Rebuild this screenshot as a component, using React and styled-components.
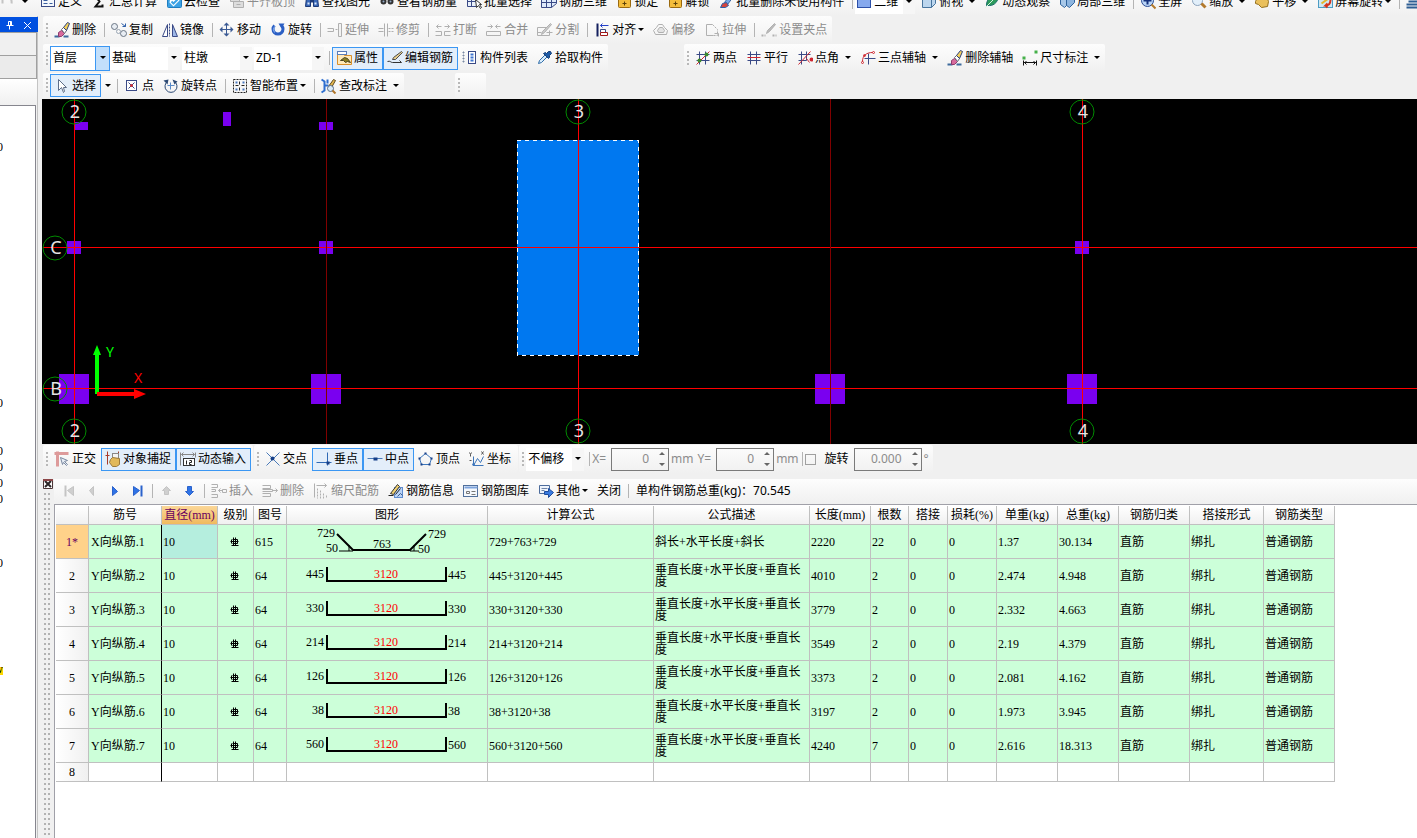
import React from "react";
import styled, { createGlobalStyle, css } from "styled-components";

const GlobalStyle = createGlobalStyle`
  *, *::before, *::after { box-sizing: border-box; }
  html, body { margin: 0; height: 100%; background: #f0f0f0; }
  body { font: 12px/16px "Noto Sans", "Noto Sans CJK SC", sans-serif; color: #000; overflow: hidden; }
  #root { height: 100%; }
  button, input, select { font: inherit; color: inherit; }
`;

/* ---------- icons ---------- */

const navy = "#3a4a86";
const blue = "#2f6fd0";
const gray = "#b0b0b0";
const red = "#d02630";

const sparkBrush = (
  <>
    <path d="M0 14h5M9 14h5" stroke="#3d6a9c" strokeWidth="2" />
    <path d="M4 10l3-2 3 3-3 3H4z" fill="#d86a9c" stroke="#8c3c6e" />
    <path d="M7 7l2-2 3 3-2 3z" fill="#fff" stroke="#667" />
    <path d="M9 5l4-5 2 1-3 7z" fill="#f3d05a" stroke="#2b3f7c" />
  </>
);
const navShape = (d, on, bar) => (
  <>
    <path d={d} fill={on ? "#2f73e6" : "#cfcfcf"} stroke={on ? "#2a62cc" : "#c4c4c4"} />
    {bar && <path d={bar} stroke={on ? "#2a62cc" : "#c4c4c4"} strokeWidth="2" />}
  </>
);
const lockShape = (
  <>
    <path d="M5 6V3a3 3 0 0 1 6 0v3" stroke="#8a6a20" strokeWidth="2" />
    <rect x="2" y="4" width="12" height="9" rx="1" fill="#f4bd3b" stroke="#9a6a10" />
    <path d="M8 7v4M6 9h4" stroke="#5c4108" />
  </>
);

const ICONS = {
  erase: sparkBrush,
  copy: (
    <>
      <circle cx="3" cy="4" r="3" stroke="#6b7684" fill="#e8edf3" />
      <circle cx="12" cy="11" r="3" stroke="#6b7684" fill="#e8edf3" />
      <circle cx="7" cy="9" r="2" stroke="#9aa6b4" />
      <path d="M10 1l4 3M14 1v3h-3" stroke="#2f5fa8" />
    </>
  ),
  mirror: (
    <>
      <path d="M5 2v12H0z" fill="#fff" stroke={navy} />
      <path d="M10 2v12h5z" fill="#9db7e6" stroke={navy} />
      <path d="M7 1v13" stroke={navy} strokeDasharray="2 1" />
    </>
  ),
  move: (
    <>
      <path d="M7 2v11M2 7h11" stroke="#3b5a94" />
      <path d="M7 0l3 3H4zM7 14l3-3H4zM0 7l3-3v6zM14 7l-3-3v6z" fill="#3b5a94" />
    </>
  ),
  rotate: (
    <>
      <path d="M4 3a5 5 0 1 0 7 0" stroke="#2b5fc4" strokeWidth="3" />
      <path d="M8 1h6l-3 5z" fill="#2b5fc4" />
      <path d="M4 4a5 5 0 0 0 0 6" stroke="#8fb6f2" />
    </>
  ),
  extend: (
    <>
      <path d="M0 6h6v3H0M8 7h2" stroke={gray} />
      <path d="M11 1h3v13h-3z" stroke={gray} fill="#f2f2f2" />
    </>
  ),
  trim: (
    <>
      <path d="M0 6h5M0 9h5M6 1v13M9 1v13" stroke={gray} />
      <path d="M10 6h5M10 9h5" stroke={gray} strokeDasharray="2 1" />
    </>
  ),
  breakIt: (
    <>
      <path d="M0 9h6v4H0M15 9H9v4h6" stroke={gray} />
      <path d="M1 4h5M9 4h5M3 2L1 4l2 2M12 2l2 2-2 2" stroke={gray} />
    </>
  ),
  merge: (
    <>
      <path d="M0 9h14v4H0z" stroke={gray} />
      <path d="M1 4h5M9 4h5M4 2l2 2-2 2M11 2L9 4l2 2" stroke={gray} />
    </>
  ),
  split: (
    <>
      <path d="M0 5h9M0 5v8h12V8M0 10h4M9 10h6" stroke={gray} />
      <path d="M4 12l1-3 8-8 1 1-7 8z" fill="#ccc" stroke={gray} />
    </>
  ),
  align: (
    <>
      <path d="M3 1v13" stroke="#14205e" strokeWidth="2" />
      <path d="M6 3h8M8 1L6 3l2 2" stroke="#2440c8" />
      <path d="M6 7h5v3H6z" fill="#fff" stroke={navy} />
      <path d="M6 10h7v3H6z" fill="#fff" stroke="#a01818" />
    </>
  ),
  offset: (
    <>
      <path d="M5 2h4l2 3 3 3-1 4H2L0 8l3-3z" stroke={gray} />
      <path d="M6 5h3l2 3-1 2H5L4 8z" stroke={gray} fill="#e3e3e3" />
    </>
  ),
  stretch: (
    <>
      <path d="M9 13H2V2h6" stroke={gray} />
      <path d="M8 2l5 5v6H9" stroke={gray} strokeDasharray="2 1" />
      <path d="M10 11h4v3" stroke={gray} />
    </>
  ),
  clampSet: (
    <>
      <path d="M0 13h4M11 13h4" stroke={gray} strokeWidth="2" strokeDasharray="2 1" />
      <path d="M5 11l1-3 7-7 1 1-6 7z" fill="#bbb" stroke={gray} />
    </>
  ),
  props: (
    <>
      <path d="M1 3h6l1 2h7v9H1z" fill="#ffe9b8" stroke="#d98f2b" />
      <rect x="1" y="1" width="9" height="3" fill="#fff" stroke="#5a7cb8" />
      <path d="M4 10l4-3 3 1 3 4-3-1-2 1-2-2z" fill="#8b7d20" stroke="#4b4420" />
    </>
  ),
  editBar: (
    <>
      <path d="M0 11c3-1 3 1 5 1h9l-2-2" stroke="#333" />
      <path d="M5 9l1-2 8-6 1 1-7 7z" fill="#e8cf8e" stroke="#4c4c4c" />
    </>
  ),
  list: (
    <>
      <path d="M0 2h3M0 5h3M0 8h3M0 11h3M1 1v12" stroke="#7a8aa4" strokeDasharray="2 1" />
      <rect x="6" y="1" width="7" height="12" fill="#fff" stroke={navy} />
      <path d="M8 4h3M8 7h3M8 10h3" stroke="#3e74cf" strokeWidth="2" />
    </>
  ),
  dropper: (
    <>
      <path d="M1 13l1-3 6-6 2 2-6 6z" fill="#d8ecfb" stroke="#2d6ba8" />
      <path d="M8 2l1 1 2-2 2 0 1 2-2 2 0 2-1 1-5-5z" fill="#1d5aa6" stroke="#123c74" />
    </>
  ),
  twoPoint: (
    <>
      <path d="M4 1v13M10 1v13M1 4h13M1 10h13" stroke={navy} />
      <path d="M1 14L14 1" stroke={red} />
      <circle cx="4" cy="10" r="2" fill="#3e8a2c" />
      <circle cx="11" cy="4" r="2" fill="#3e8a2c" />
    </>
  ),
  parallel: (
    <>
      <path d="M4 1v13M10 1v13M1 10h13M1 4h13" stroke={navy} />
      <path d="M1 7h13" stroke={red} />
    </>
  ),
  angle: (
    <>
      <path d="M4 1v13M9 1v9M1 4h12M1 10h8" stroke={navy} />
      <path d="M1 14L13 1M9 8l3 4" stroke={red} />
      <circle cx="14" cy="9" r="1" stroke={red} strokeWidth="2" />
    </>
  ),
  threePoint: (
    <>
      <path d="M8 3v11M4 8h11" stroke={navy} />
      <path d="M12 2C6 2 2 5 2 11" stroke={red} />
      <circle cx="13" cy="2" r="1" stroke={red} />
      <circle cx="4" cy="5" r="1" stroke={red} />
      <circle cx="2" cy="12" r="1" stroke={red} />
    </>
  ),
  dimension: (
    <>
      <path d="M1 10v5M14 10v5M1 12h13M4 11l-2 1 2 2M11 11l2 1-2 2" stroke="#111" />
      <path d="M0 6h3v3H0zM12 0h3v3h-3z" fill="#45b049" />
    </>
  ),
  cursor: <path d="M4 1v11l3-3 2 5 1-1-1-4h3z" fill="#fff" stroke="#5d6d88" />,
  pointBox: (
    <>
      <rect x="2" y="2" width="10" height="10" fill="#fff" stroke={navy} />
      <path d="M4 4l6 6M10 4l-6 6" stroke={navy} />
      <circle cx="7" cy="7" r="1" fill={red} stroke={red} />
    </>
  ),
  rotatePoint: (
    <>
      <path d="M4 3a6 6 0 1 0 7 0" stroke="#2d4a74" />
      <path d="M7 4v7M4 7h7" stroke="#5a8bc8" />
      <path d="M0 2l5-1-1 5zM9 1l5 2-3 3z" fill="#2d4a74" />
    </>
  ),
  smart: (
    <>
      <rect x="1" y="1" width="13" height="13" stroke="#222" strokeDasharray="2 1" />
      <path d="M7 3v3M7 9v3M3 7h3M9 7h3" stroke="#222" />
      <path d="M3 3h2v2H3zM10 3h2v2h-2zM3 10h2v2H3zM10 10h2v2h-2z" fill="#4a78c0" />
    </>
  ),
  checkDim: (
    <>
      <path d="M0 1l3 2v9l-3 2M3 7h4M6 1v4" stroke={blue} strokeWidth="2" />
      <path d="M7 8l5-7 2 1-4 7z" fill="#e6b84e" stroke="#5b4a20" />
      <circle cx="9" cy="10" r="3" stroke="#586c86" fill="#d9ebfa" />
      <path d="M11 12l3 3" stroke="#b1762a" strokeWidth="2" />
    </>
  ),
  ortho: (
    <>
      <path d="M0 2h14M3 0v15" stroke="#dd9a9a" strokeWidth="3" />
      <path d="M6 6l2 7 1-2 3 3 1-1-3-3 3-1z" fill="#e7edf5" stroke="#7b89a0" />
    </>
  ),
  snap: (
    <>
      <path d="M2 0v13M0 4h4M13 0v6" stroke="#a83a2a" />
      <rect x="7" y="2" width="6" height="5" fill="#f4f4f4" stroke="#888" />
      <path d="M5 8l2-2 7 1v6l-3 2H7l-3-4z" fill="#e2b95a" stroke="#9c7a3c" />
    </>
  ),
  dynamic: (
    <>
      <path d="M0 1v13M15 1v5M1 3h13M3 1L1 3l2 2M12 1l2 2-2 2" stroke="#888" />
      <rect x="3" y="7" width="11" height="7" fill="#fff" stroke="#333" />
      <path d="M6 9v4M9 9h2v2H9v2h2" stroke="#222" />
    </>
  ),
  cross: (
    <>
      <path d="M1 1l13 13M14 1L1 14" stroke="#4a7ab8" />
      <circle cx="7" cy="7" r="2" fill="#163f88" />
    </>
  ),
  perp: (
    <>
      <path d="M11 1v13M0 11h15" stroke="#2f69b4" />
      <rect x="10" y="10" width="3" height="3" fill="#163f88" />
    </>
  ),
  mid: (
    <>
      <path d="M0 7h15" stroke="#4a7ab8" />
      <rect x="6" y="6" width="4" height="3" fill="#163f88" />
    </>
  ),
  pentagon: (
    <>
      <path d="M7 2l6 5-2 6H3L1 7z" stroke="#3d76bb" />
      <path d="M6 1h2v2H6zM12 6h2v2h-2zM0 6h2v2H0zM2 12h2v2H2zM10 12h2v2h-2z" fill="#163f88" />
    </>
  ),
  coord: (
    <>
      <path d="M4 5v9h10M4 14l4-7 3 4 3-6" stroke="#3d76bb" />
      <path d="M0 1l1 2 1-2M1 3v2M12 0l2 3M14 0l-2 3M0 9h2" stroke="#555" />
      <circle cx="4" cy="13" r="1" stroke="#3d76bb" />
    </>
  ),
  first: navShape("M12 3v9L6 7z", false, "M4 2v11"),
  prev: navShape("M9 3v9L5 7z", false),
  next: navShape("M5 3v9l5-4z", true),
  last: navShape("M3 3v9l6-5z", true, "M11 2v11"),
  up: navShape("M7 3l4 4H9v4H5V7H3z", false),
  down: navShape("M7 12l4-4H9V3H5v5H3z", true),
  insert: (
    <>
      <path d="M0 1h6v3H0M0 6h4v2H0M0 11h6v3H0" stroke={gray} />
      <path d="M7 7h4M9 5L7 7l2 2M11 6h4v3h-4z" stroke={gray} />
    </>
  ),
  remove: (
    <>
      <path d="M0 2h8v3H0M0 6h10v2H0M0 10h8v3H0" stroke={gray} />
      <path d="M10 7h5M13 5l2 2-2 2" stroke={gray} />
    </>
  ),
  scaleBar: (
    <>
      <path d="M1 0v14M3 2h10M11 0l2 2-2 2" stroke={gray} />
      <path d="M4 5v10M7 7v8M10 10v5M13 12v3" stroke={gray} strokeDasharray="2 1" />
    </>
  ),
  info: (
    <>
      <rect x="6" y="4" width="8" height="10" fill="#b9d3f6" stroke="#5f8cd0" />
      <path d="M0 12h5M7 11l5-6" stroke="#222" />
      <path d="M2 10l7-9 2 2-6 8z" fill="#f1d171" stroke="#333" />
      <path d="M9 13l3-3 2 2" stroke="#3b5b8a" />
    </>
  ),
  library: (
    <>
      <rect x="0" y="2" width="14" height="11" fill="#f4f8fd" stroke="#51709c" />
      <path d="M1 4h13" stroke="#7fa4dc" strokeWidth="2" />
      <path d="M3 8h3v2H3zM8 8h4M8 11h4" stroke="#777" />
    </>
  ),
  other: (
    <>
      <path d="M1 2h10v8H1z" fill="#eef4fc" stroke="#4d6c9c" />
      <path d="M3 5h6M3 7h3" stroke="#6f84a8" />
      <path d="M6 8h4V5l5 4-5 5v-3H6z" fill="#3a7be0" stroke="#1d4c9e" />
    </>
  ),
  form: (
    <>
      <rect x="1" y="0" width="13" height="12" fill="#f4f8fd" stroke={navy} />
      <path d="M3 6h4M3 9h4M9 9h3" stroke="#3a5ea0" />
    </>
  ),
  sigma: <path d="M11 4V2H4l4 5-4 5h7v-2" stroke="#111" strokeWidth="2" />,
  cloud: (
    <>
      <rect x="1" y="0" width="14" height="13" rx="1" fill="#3ba1e4" stroke="#1f7dc0" />
      <path d="M3 8l4 4 6-6-1-4H4z" fill="#fff" />
      <path d="M5 7l2 2 4-4" stroke="#3ba1e4" strokeWidth="2" />
    </>
  ),
  flush: <path d="M1 2h9v5H1zM4 7h10v6H4zM7 10h4" stroke={gray} fill="#ddd" />,
  binocular: (
    <>
      <path d="M2 3h4v9H1zM9 3h4l1 9H9z" fill="#3a68b8" stroke="#1c3a78" />
      <path d="M6 5h3v3H6z" fill="#1c3a78" />
      <path d="M3 8h2v2H3zM10 8h2v2h-2z" fill="#d7e6fa" />
    </>
  ),
  glasses: (
    <>
      <circle cx="4" cy="7" r="2" fill="#8fa8c4" stroke="#333" strokeWidth="2" />
      <circle cx="11" cy="7" r="2" fill="#8fa8c4" stroke="#333" strokeWidth="2" />
      <path d="M2 4h11" stroke="#333" />
    </>
  ),
  batch: (
    <>
      <path d="M1 2h9v10H1zM1 7h9M5 2v10" stroke={navy} fill="#eaf1fb" />
      <path d="M9 5l1 8 2-2 2 3 1-1-2-3h2z" fill="#fff" stroke="#333" />
    </>
  ),
  grid3: <path d="M0 4l5-4h10v9l-5 4H0zM0 8h15M5 0v13M10 0v13" stroke={navy} fill="#dfeafb" />,
  lock: lockShape,
  unlock: lockShape,
  brush: (
    <>
      <path d="M6 8l6-8 3 2-6 8z" fill="#77a8e6" stroke="#3664a4" />
      <path d="M2 13l2-4 4-1 2 3-3 2z" fill="#d5443c" stroke="#2b5fa8" />
    </>
  ),
  plane: <rect x="1" y="0" width="13" height="13" fill="#86a9ee" stroke="#2d50a8" />,
  cube: <path d="M1 4l4-4h9v9l-4 4H1zM1 4h9l4-4M10 4v9" fill="#bcd6ee" stroke="#48759e" />,
  leaf: (
    <>
      <path d="M2 11C2 4 7 0 14 0c0 7-4 11-9 11z" fill="#2d9c5c" stroke="#1b6d6a" />
      <path d="M1 13L9 5" stroke="#d6f2e0" />
    </>
  ),
  blocks: (
    <>
      <path d="M1 5l4-4 4 2v6l-4 4-4-3z" fill="#a8c8e8" stroke="#2f639c" />
      <path d="M7 5l4-4 4 2v5l-5 5-3-2z" fill="#8db5df" stroke="#2f639c" />
    </>
  ),
  fullView: (
    <>
      <circle cx="7" cy="6" r="6" fill="#b9d4f6" stroke="#2b4c94" />
      <path d="M7 2v8M3 6h8" stroke="#14307c" strokeWidth="2" />
      <path d="M11 10l4 4" stroke="#b47a2c" strokeWidth="2" />
    </>
  ),
  zoomView: (
    <>
      <circle cx="6" cy="6" r="5" fill="#e2effa" stroke="#8aa2bc" />
      <path d="M10 9l4 4" stroke="#b47a2c" strokeWidth="3" />
    </>
  ),
  hand: <path d="M1 7l3-6 7-2 3 8-1 5-6 1-3-3-3-1z" fill="#eac05c" stroke="#94701e" />,
  screenTurn: (
    <>
      <rect x="1" y="0" width="14" height="13" fill="#cfe8f4" stroke="#4d9cc4" />
      <path d="M4 9l7-5" stroke="#e4b62c" strokeWidth="2" />
      <path d="M13 5c0 5-3 6-5 6l2-2M8 11l2 2" stroke="#d5341c" strokeWidth="2" />
    </>
  ),
  layers: <path d="M3 3h13M2 7h14M0 10h16M0 13h16" stroke="#2f5f94" strokeWidth="2" />,
  undo: <path d="M2 4c4-4 10-1 9 5M2 4v5" stroke="#c4c4c4" strokeWidth="2" />,
};

const IconSvg = styled.svg`
  flex: none;
  width: 16px;
  height: 16px;
  display: block;
`;
const Icon = ({ name }) => (
  <IconSvg viewBox="0 0 16 16" fill="none" aria-hidden="true">
    <g transform="translate(.5 .5)">{ICONS[name]}</g>
  </IconSvg>
);

/* ---------- toolbar parts ---------- */

const Bar = styled.div`
  display: flex;
  align-items: center;
  flex: none;
  height: ${(p) => p.$height || 28}px;
  padding-right: ${(p) => p.$end || 0}px;
  border-radius: 2px;
  background: linear-gradient(#fdfdfd, #f0f0f0);
`;
const Grip = styled.span`
  flex: none;
  width: 7px;
  height: 15px;
  background: repeating-linear-gradient(#b8b8b8 0 2px, transparent 2px 4px) 3px 0 / 2px 100% no-repeat;
`;
const Divider = styled.span`
  flex: none;
  width: 6px;
  height: 14px;
  background: linear-gradient(#b4b4b4, #b4b4b4) 3px 0 / 1px 100% no-repeat;
`;
const ToolButton = styled.button`
  display: flex;
  align-items: center;
  flex: none;
  gap: 2px;
  height: 23px;
  padding: 0 ${(p) => (p.$plain ? 3 : 4)}px 0 3px;
  border: 1px solid ${(p) => (p.$on ? "#3b97f3" : "transparent")};
  background: ${(p) => (p.$on ? "#e3eefa" : "transparent")};
  white-space: nowrap;
  color: #000;
  &:disabled { color: #8c8c8c; }
`;
const NavButton = styled.button`
  display: flex;
  align-items: center;
  justify-content: center;
  flex: none;
  width: 23px;
  height: 23px;
  padding: 0;
  border: 0;
  background: transparent;
`;
const CaretSvg = styled.svg`
  flex: none;
  display: block;
  width: 6px;
  height: 4px;
`;
const CaretSlot = styled.span`
  display: flex;
  justify-content: ${(p) => (p.$end ? "flex-end" : "center")};
  flex: none;
  width: ${(p) => p.$width}px;
`;
const Caret = ({ width = 6, end }) => (
  <CaretSlot $width={width} $end={end}>
    <CaretSvg viewBox="0 0 6 4" aria-hidden="true">
      <path d="M0 0h6L3 3z" fill="#000" />
    </CaretSvg>
  </CaretSlot>
);

const Tool = ({ icon, label, on, off, menu, wide }) => (
  <ToolButton type="button" $on={on} disabled={off} $plain={!icon} aria-pressed={on ? true : undefined}>
    {icon && <Icon name={icon} />}
    <span>{label}</span>
    {menu && <Caret width={wide ? 10 : 6} end />}
  </ToolButton>
);

const SelectBox = styled.span`
  display: flex;
  flex: none;
  align-items: stretch;
  width: ${(p) => p.$width}px;
  height: ${(p) => (p.$focus ? 25 : 23)}px;
  margin-right: ${(p) => (p.$focus ? 0 : 2)}px;
  border: ${(p) => (p.$focus ? "1px solid #3b97f3" : "0")};
  background: #fff;
`;
const SelectField = styled.select`
  appearance: none;
  flex: 1;
  min-width: 0;
  padding: 0 0 0 2px;
  border: 0;
  outline: 0;
  background: transparent;
`;
const SelectArrow = styled.span`
  display: flex;
  align-items: center;
  justify-content: center;
  width: ${(p) => (p.$focus ? 14 : 12)}px;
  border-left: ${(p) => (p.$focus ? "1px solid #3b97f3" : "0")};
  background: ${(p) => (p.$focus ? "#c2dffb" : "#f6f6f6")};
`;
const SelectIcon = styled.span`
  align-self: center;
  padding-left: 1px;
`;
const Combo = ({ label, value, width, focus, icon }) => (
  <SelectBox $width={width} $focus={focus}>
    {icon && (
      <SelectIcon>
        <Icon name={icon} />
      </SelectIcon>
    )}
    <SelectField aria-label={label} defaultValue={value}>
      <option>{value}</option>
    </SelectField>
    <SelectArrow $focus={focus}>
      <Caret />
    </SelectArrow>
  </SelectBox>
);

const SpinBox = styled.span`
  display: flex;
  flex: none;
  align-items: center;
  width: ${(p) => p.$width}px;
  height: 23px;
  margin: 0 2px 0 5px;
  padding-right: 3px;
  border: 1px solid #7a7a7a;
  color: #8c8c8c;
`;
const SpinField = styled.input`
  flex: 1;
  min-width: 0;
  padding: 0 10px 0 0;
  border: 0;
  outline: 0;
  background: transparent;
  text-align: right;
`;
const SpinArrows = styled.svg`
  flex: none;
  width: 6px;
  height: 16px;
`;
const Spin = ({ id, value, width, label }) => (
  <SpinBox $width={width}>
    <SpinField id={id} aria-label={label} defaultValue={value} inputMode="decimal" />
    <SpinArrows viewBox="0 0 6 16" aria-hidden="true">
      <path d="M0 4h6L3 1zM0 12h6l-3 3z" fill="#666" />
    </SpinArrows>
  </SpinBox>
);
const FieldLabel = styled.label`
  color: ${(p) => (p.$dim ? "#8c8c8c" : "#000")};
  white-space: nowrap;
`;
const Unit = styled.span`
  color: #8c8c8c;
  padding-right: ${(p) => p.$gap || 0}px;
`;
const Tick = styled.input`
  appearance: none;
  flex: none;
  width: 11px;
  height: 11px;
  margin: 0 9px 0 0;
  border: 1px solid #a0a0a0;
`;

/* ---------- page frame ---------- */

const Page = styled.div`
  display: flex;
  flex-direction: column;
  height: 100vh;
  overflow: hidden;
`;
const ClippedRow = styled.header`
  display: flex;
  align-items: flex-end;
  flex: none;
  height: 16px;
  overflow: hidden;
`;
const Body = styled.div`
  display: flex;
  flex: 1;
  min-height: 0;
`;
const Side = styled.aside`
  display: flex;
  flex-direction: column;
  flex: none;
  width: 38px;
  padding-top: 1px;
  border-right: 1px solid #c4c4c4;
`;
const SideTitle = styled.div`
  display: flex;
  align-items: center;
  justify-content: flex-end;
  flex: none;
  gap: 8px;
  width: 38px;
  height: 15px;
  padding-right: 5px;
  background: #0050e0;
`;
const SideButton = styled.button`
  padding: 0;
  border: 0;
  background: transparent;
  width: 10px;
  height: 10px;
  svg { display: block; }
`;
const SideCell = styled.div`
  flex: none;
  width: 37px;
  height: 23px;
  border: solid #a0a0a0;
  border-width: 1px 1px 0 0;
  background: ${(p) => p.$tone};
`;
const SideTabs = styled.div`
  flex: none;
  width: 37px;
  height: 27px;
  border-top: 1px solid #a0a0a0;
  background: linear-gradient(#fff, #f0f0f0);
`;
const SideTree = styled.ul`
  flex: 1;
  width: 36px;
  margin: 0;
  padding: 33px 0 0;
  border: solid #86868e;
  border-width: 1px 1px 0 0;
  background: #fff;
  list-style: none;
  overflow: hidden;
`;
const TreeTail = styled.li`
  display: flex;
  justify-content: flex-end;
  width: 3px;
  height: 16px;
  overflow: hidden;
  font-family: "Liberation Serif", serif;
  mark { height: 8px; line-height: 4px; background: #ffd800; }
`;
const Main = styled.main`
  display: flex;
  flex-direction: column;
  flex: 1;
  min-width: 0;
  padding-left: 4px;
`;
const BarRow = styled.div`
  display: flex;
  align-items: center;
  flex: none;
  gap: ${(p) => p.$gap || 0}px;
  height: ${(p) => p.$height || 28}px;
  padding-left: 1px;
`;
const Viewport = styled.svg`
  display: block;
  flex: none;
  width: 100%;
  height: 345px;
  background: #000;
`;

/* ---------- rebar editor ---------- */

const Editor = styled.section`
  display: flex;
  flex: 1;
  min-height: 0;
  padding-top: 5px;
`;
const Gutter = styled.div`
  display: flex;
  flex-direction: column;
  flex: none;
  gap: 3px;
  width: 12px;
  padding-left: 1px;
`;
const GutterClose = styled.button`
  display: block;
  width: 10px;
  height: 10px;
  padding: 0;
  border: 0;
  background: transparent;
  svg { display: block; }
`;
const Dots = styled.div`
  flex: 1;
  width: 9px;
  background: conic-gradient(from 270deg at 2px 2px, #b2b2b2 90deg, transparent 0) 1px 1px / 4px 5px;
`;
const EditorMain = styled.div`
  display: flex;
  flex-direction: column;
  flex: 1;
  min-width: 0;
  background: #fff;
`;
const EditorBar = styled(Bar)`
  height: 26px;
  padding: 0 0 2px 3px;
  border-bottom: 1px solid #a0a0a8;
  border-radius: 0;
`;
const Total = styled.span`
  padding-left: 5px;
`;
const TableArea = styled.div`
  flex: 1;
  min-height: 0;
  padding: 1px 0 0 1px;
  border-left: 1px solid #a0a0a8;
  overflow: hidden;
`;
const Grid = styled.table`
  table-layout: fixed;
  width: ${(p) => p.$width}px;
  border-spacing: 0;
  border-collapse: separate;
  font: 12px/12px "Liberation Serif", "Noto Sans CJK SC", serif;
`;
const cell = css`
  padding: 0 2px;
  border: solid #c0c0c0;
  border-width: 0 1px 1px 0;
  overflow: hidden;
`;
const Head = styled.th`
  ${cell}
  height: 19px;
  font-weight: 400;
  white-space: nowrap;
  color: ${(p) => (p.$on ? "#6a0060" : "#000")};
  background: ${(p) => (p.$on ? "linear-gradient(#fbd697, #f0ba5e)" : "linear-gradient(#fff, #f0f0f0)")};
`;
const RowHead = styled.th`
  ${cell}
  padding-right: 9px;
  padding-left: 9px;
  text-align: center;
  font-weight: 400;
  color: ${(p) => (p.$on ? "#6a0060" : "#000")};
  background: ${(p) => (p.$on ? "#ffd28a" : "linear-gradient(90deg, #fff, #f0f0f0)")};
`;
const Cell = styled.td`
  ${cell}
  padding-left: ${(p) => (p.$marker ? 2 : 1)}px;
  height: ${(p) => (p.$blank ? 19 : 34)}px;
  border-right-color: ${(p) => (p.$marker ? "#000" : "#c0c0c0")};
  background: ${(p) => (p.$blank ? "#fff" : p.$active ? "#b5eede" : "#ccffd9")};
`;
const ShapeCell = styled(Cell)`
  padding: 0;
`;
const ShapeSvg = styled.svg`
  display: block;
  width: 200px;
  height: 33px;
`;
const GradeSvg = styled.svg`
  display: block;
  width: 10px;
  height: 10px;
  margin: 0 auto;
`;

const COLUMNS = [
  ["", 33], ["筋号", 73], ["直径(mm)", 56], ["级别", 36], ["图号", 33], ["图形", 201],
  ["计算公式", 166], ["公式描述", 156], ["长度(mm)", 61], ["根数", 38], ["搭接", 39],
  ["损耗(%)", 49], ["单重(kg)", 61], ["总重(kg)", 61], ["钢筋归类", 71], ["搭接形式", 74],
  ["钢筋类型", 71],
];
const TABLE_WIDTH = COLUMNS.reduce((sum, c) => sum + c[1], 0);
const LONG = "垂直长度+水平长度+垂直长度";
const ROWS = [
  { name: "X向纵筋.1", fig: "615", formula: "729+763+729", desc: "斜长+水平长度+斜长", len: "2220", n: "22", unit: "1.37", total: "30.134" },
  { name: "Y向纵筋.2", fig: "64", side: "445", desc: LONG, len: "4010", n: "2", unit: "2.474", total: "4.948" },
  { name: "Y向纵筋.3", fig: "64", side: "330", desc: LONG, len: "3779", n: "2", unit: "2.332", total: "4.663" },
  { name: "Y向纵筋.4", fig: "64", side: "214", desc: LONG, len: "3549", n: "2", unit: "2.19", total: "4.379" },
  { name: "Y向纵筋.5", fig: "64", side: "126", desc: LONG, len: "3373", n: "2", unit: "2.081", total: "4.162" },
  { name: "Y向纵筋.6", fig: "64", side: "38", desc: LONG, len: "3197", n: "2", unit: "1.973", total: "3.945" },
  { name: "Y向纵筋.7", fig: "64", side: "560", desc: LONG, len: "4240", n: "7", unit: "2.616", total: "18.313" },
];

const GradeMark = () => (
  <GradeSvg viewBox="0 0 10 10" role="img" aria-label="HRB400">
    <path
      d="M3 0v8M5 0v8M1 8h7M2 2h5M2 6h5M0 4h8M1 2v4M7 2v4"
      transform="translate(.5 .5)"
      stroke="#000"
      fill="none"
    />
  </GradeSvg>
);

const BentShape = () => (
  <ShapeSvg viewBox="0 0 200 33">
    <path d="M50 9l16 16h57l16-16" stroke="#000" strokeWidth="2" fill="none" />
    <path d="M52 26h14M62 20v6M127 20v6M123 26h9" stroke="#000" fill="none" />
    <text x="30" y="12">729</text>
    <text x="39" y="27">50</text>
    <text x="86" y="23">763</text>
    <text x="131" y="28">50</text>
    <text x="141" y="13">729</text>
  </ShapeSvg>
);
const HookShape = ({ side }) => (
  <ShapeSvg viewBox="0 0 200 33">
    <path d="M40 8v14h119V8" stroke="#000" strokeWidth="2" fill="none" />
    <text x="37" y="19" textAnchor="end">{side}</text>
    <text x="99" y="19" textAnchor="middle" fill="#f00">3120</text>
    <text x="161" y="20">{side}</text>
  </ShapeSvg>
);

const RebarTable = () => (
  <Grid $width={TABLE_WIDTH}>
    <colgroup>
      {COLUMNS.map(([title, width]) => (
        <col key={title} width={width} />
      ))}
    </colgroup>
    <thead>
      <tr>
        {COLUMNS.map(([title], i) => (
          <Head key={title} scope="col" $on={i === 2}>{title}</Head>
        ))}
      </tr>
    </thead>
    <tbody>
      {ROWS.map((r, i) => (
        <tr key={r.name}>
          <RowHead scope="row" $on={i === 0}>{i === 0 ? "1*" : i + 1}</RowHead>
          <Cell $marker>{r.name}</Cell>
          <Cell $active={i === 0}>10</Cell>
          <Cell><GradeMark /></Cell>
          <Cell>{r.fig}</Cell>
          <ShapeCell>{r.side ? <HookShape side={r.side} /> : <BentShape />}</ShapeCell>
          <Cell>{r.formula || `${r.side}+3120+${r.side}`}</Cell>
          <Cell>{r.desc}</Cell>
          <Cell>{r.len}</Cell>
          <Cell>{r.n}</Cell>
          <Cell>0</Cell>
          <Cell>0</Cell>
          <Cell>{r.unit}</Cell>
          <Cell>{r.total}</Cell>
          <Cell>直筋</Cell>
          <Cell>绑扎</Cell>
          <Cell>普通钢筋</Cell>
        </tr>
      ))}
      <tr>
        <RowHead scope="row">8</RowHead>
        {COLUMNS.slice(1).map(([title], i) => (
          <Cell key={title} $blank $marker={i === 0} />
        ))}
      </tr>
    </tbody>
  </Grid>
);

/* ---------- drawing ---------- */

const COLUMNS_DRAWN = [
  [33, 23, 13, 8], [181, 13, 8, 14], [277, 23, 14, 8],
  [25, 142, 14, 13], [277, 142, 14, 13], [1033, 142, 14, 13],
  [17, 275, 30, 30], [269, 275, 30, 30], [773, 275, 30, 30], [1025, 275, 30, 30],
];
const AXES = [["2", 32], ["3", 536], ["4", 1040]];

const Bubble = ({ x, y, children }) => (
  <g>
    <circle cx={x} cy={y} r="12" fill="none" stroke="#008a00" />
    <text x={x + 1} y={y + 6} textAnchor="middle" fontSize="18" fill="#e4e4e4">{children}</text>
  </g>
);

const Drawing = () => (
  <Viewport role="img" aria-label="绘图区">
    {COLUMNS_DRAWN.map(([x, y, w, h]) => (
      <rect key={`${x}-${y}`} x={x} y={y} width={w} height={h} fill="#7a00f0" />
    ))}
    <rect x="475" y="41" width="122" height="215" fill="#0078f0" />
    <g shapeRendering="crispEdges">
      <path d="M475 41h121v215H475z" stroke="#fff" strokeDasharray="4 4" fill="none" />
      <line x1="1" x2="100%" y1="148" y2="148" stroke="#f00" />
      <line x1="1" x2="100%" y1="289" y2="289" stroke="#f00" />
      <path d="M284 0v345M788 0v345" stroke="#800000" />
      <path d="M32 0v345M536 0v345M1040 0v345" stroke="#f00" />
    </g>
    {AXES.map(([label, x]) => (
      <g key={label}>
        <Bubble x={x} y={13}>{label}</Bubble>
        <Bubble x={x} y={332}>{label}</Bubble>
      </g>
    ))}
    <Bubble x={13} y={149}>C</Bubble>
    <Bubble x={13} y={290}>B</Bubble>
    <path d="M53 295v-39h-2l4-10 4 10h-2v39z" fill="#0f0" />
    <path d="M55 293h37v-3l12 5-12 5v-3H55z" fill="#f00" />
    <text x="64" y="258" fontSize="14" fill="#0f0">Y</text>
    <text x="92" y="284" fontSize="14" fill="#f00">X</text>
  </Viewport>
);

/* ---------- page ---------- */

const TREE = Array.from({ length: 34 }, (_, i) => ([0, 16, 19, 20, 21, 22, 26].includes(i) ? "0" : i === 33 ? "w" : ""));

export default function App() {
  return (
    <Page>
      <GlobalStyle />
      <ClippedRow>
        <Bar $end={8}>
          <Icon name="undo" />
          <Caret width={12} end />
        </Bar>
        <Bar>
          <Tool icon="form" label="定义" />
          <Tool icon="sigma" label="汇总计算" />
          <Tool icon="cloud" label="云检查" />
          <Tool icon="flush" label="平齐板顶" off />
          <Tool icon="binocular" label="查找图元" />
          <Tool icon="glasses" label="查看钢筋量" />
          <Tool icon="batch" label="批量选择" />
          <Tool icon="grid3" label="钢筋三维" />
          <Tool icon="lock" label="锁定" />
          <Tool icon="unlock" label="解锁" />
          <Tool icon="brush" label="批量删除未使用构件" />
        </Bar>
        <Bar>
          <Divider />
          <Combo label="视图" value="二维" width={60} icon="plane" />
          <Tool icon="cube" label="俯视" menu wide />
          <Tool icon="leaf" label="动态观察" />
          <Tool icon="blocks" label="局部三维" />
          <Divider />
          <Tool icon="fullView" label="全屏" />
          <Tool icon="zoomView" label="缩放" menu wide />
          <Tool icon="hand" label="平移" menu wide />
          <Tool icon="screenTurn" label="屏幕旋转" menu />
          <Divider />
          <Tool icon="layers" label="" />
        </Bar>
      </ClippedRow>
      <Body>
        <Side>
          <SideTitle>
            <SideButton type="button" aria-label="固定">
              <svg viewBox="0 0 10 10" width="10" height="10">
                <path d="M3 1h3v4M3 1v4M5 1v4M1 5h7M4 5v4" transform="translate(.5 .5)" stroke="#fff" fill="none" />
              </svg>
            </SideButton>
            <SideButton type="button" aria-label="关闭">
              <svg viewBox="0 0 10 10" width="10" height="10">
                <path d="M1 2l7 7M8 2L1 9" stroke="#fff" fill="none" />
              </svg>
            </SideButton>
          </SideTitle>
          <SideCell $tone="#f0f0f0" />
          <SideCell $tone="#ebebeb" />
          <SideTabs />
          <SideTree>
            {TREE.map((tail, i) => (
              <TreeTail key={i}>{tail === "w" ? <mark>{tail}</mark> : tail}</TreeTail>
            ))}
          </SideTree>
        </Side>
        <Main>
          <BarRow>
            <Bar>
              <Grip />
              <Tool icon="erase" label="删除" />
              <Divider />
              <Tool icon="copy" label="复制" />
              <Tool icon="mirror" label="镜像" />
              <Divider />
              <Tool icon="move" label="移动" />
              <Tool icon="rotate" label="旋转" />
              <Divider />
              <Tool icon="extend" label="延伸" off />
              <Tool icon="trim" label="修剪" off />
              <Divider />
              <Tool icon="breakIt" label="打断" off />
              <Tool icon="merge" label="合并" off />
              <Tool icon="split" label="分割" off />
              <Divider />
              <Tool icon="align" label="对齐" menu />
              <Tool icon="offset" label="偏移" off />
              <Tool icon="stretch" label="拉伸" off />
              <Divider />
              <Tool icon="clampSet" label="设置夹点" off />
            </Bar>
          </BarRow>
          <BarRow $gap={76}>
            <Bar>
              <Grip />
              <Combo label="楼层" value="首层" width={60} focus />
              <Combo label="构件类别" value="基础" width={70} />
              <Combo label="构件类型" value="柱墩" width={70} />
              <Combo label="构件名称" value="ZD-1" width={70} />
              <Divider />
              <Tool icon="props" label="属性" on />
              <Tool icon="editBar" label="编辑钢筋" on />
              <Tool icon="list" label="构件列表" />
              <Tool icon="dropper" label="拾取构件" />
            </Bar>
            <Bar>
              <Grip />
              <Tool icon="twoPoint" label="两点" />
              <Tool icon="parallel" label="平行" />
              <Tool icon="angle" label="点角" menu wide />
              <Tool icon="threePoint" label="三点辅轴" menu wide />
              <Tool icon="erase" label="删除辅轴" />
              <Tool icon="dimension" label="尺寸标注" menu wide />
            </Bar>
          </BarRow>
          <BarRow $height={27} $gap={51}>
            <Bar $height={26}>
              <Grip />
              <Tool icon="cursor" label="选择" on />
              <Caret width={13} />
              <Divider />
              <Tool icon="pointBox" label="点" />
              <Tool icon="rotatePoint" label="旋转点" />
              <Divider />
              <Tool icon="smart" label="智能布置" menu />
              <Divider />
              <Tool icon="checkDim" label="查改标注" menu wide />
            </Bar>
            <Bar $height={26} $end={24}>
              <Grip />
            </Bar>
          </BarRow>
          <Drawing />
          <BarRow $height={30} $gap={1}>
            <Bar $end={2}>
              <Grip />
              <Tool icon="ortho" label="正交" />
              <Tool icon="snap" label="对象捕捉" on />
              <Tool icon="dynamic" label="动态输入" on />
            </Bar>
            <Bar $end={2}>
              <Grip />
              <Tool icon="cross" label="交点" />
              <Tool icon="perp" label="垂点" on />
              <Tool icon="mid" label="中点" on />
              <Tool icon="pentagon" label="顶点" />
              <Tool icon="coord" label="坐标" />
            </Bar>
            <Bar $end={4}>
              <Grip />
              <Combo label="偏移方式" value="不偏移" width={58} />
              <Divider />
              <FieldLabel htmlFor="offset-x" $dim>X=</FieldLabel>
              <Spin id="offset-x" value="0" width={58} />
              <Unit $gap={4}>mm</Unit>
              <FieldLabel htmlFor="offset-y" $dim>Y=</FieldLabel>
              <Spin id="offset-y" value="0" width={58} />
              <Unit>mm</Unit>
              <Divider />
              <Tick type="checkbox" id="turn" />
              <FieldLabel htmlFor="turn">旋转</FieldLabel>
              <Spin id="turn-angle" label="旋转角度" value="0.000" width={68} />
              <Unit>°</Unit>
            </Bar>
          </BarRow>
          <Editor>
            <Gutter>
              <GutterClose type="button" aria-label="关闭面板">
                <svg viewBox="0 0 10 10" width="10" height="10">
                  <path d="M0 0h9v9H0z" transform="translate(.5 .5)" fill="#fff" stroke="#4c3638" />
                  <path d="M2 2l6 6M8 2L2 8" stroke="#2c2628" strokeWidth="2" />
                  <path d="M0 1h10" stroke="#8c4648" strokeWidth="2" />
                </svg>
              </GutterClose>
              <Dots />
            </Gutter>
            <EditorMain>
              <EditorBar>
                <NavButton type="button" aria-label="首行" disabled><Icon name="first" /></NavButton>
                <NavButton type="button" aria-label="上一行" disabled><Icon name="prev" /></NavButton>
                <NavButton type="button" aria-label="下一行"><Icon name="next" /></NavButton>
                <NavButton type="button" aria-label="末行"><Icon name="last" /></NavButton>
                <Divider />
                <NavButton type="button" aria-label="上移" disabled><Icon name="up" /></NavButton>
                <NavButton type="button" aria-label="下移"><Icon name="down" /></NavButton>
                <Divider />
                <Tool icon="insert" label="插入" off />
                <Tool icon="remove" label="删除" off />
                <Tool icon="scaleBar" label="缩尺配筋" off />
                <Tool icon="info" label="钢筋信息" />
                <Tool icon="library" label="钢筋图库" />
                <Tool icon="other" label="其他" menu />
                <Tool label="关闭" />
                <Divider />
                <Total>单构件钢筋总重(kg)：70.545</Total>
              </EditorBar>
              <TableArea>
                <RebarTable />
              </TableArea>
            </EditorMain>
          </Editor>
        </Main>
      </Body>
    </Page>
  );
}
